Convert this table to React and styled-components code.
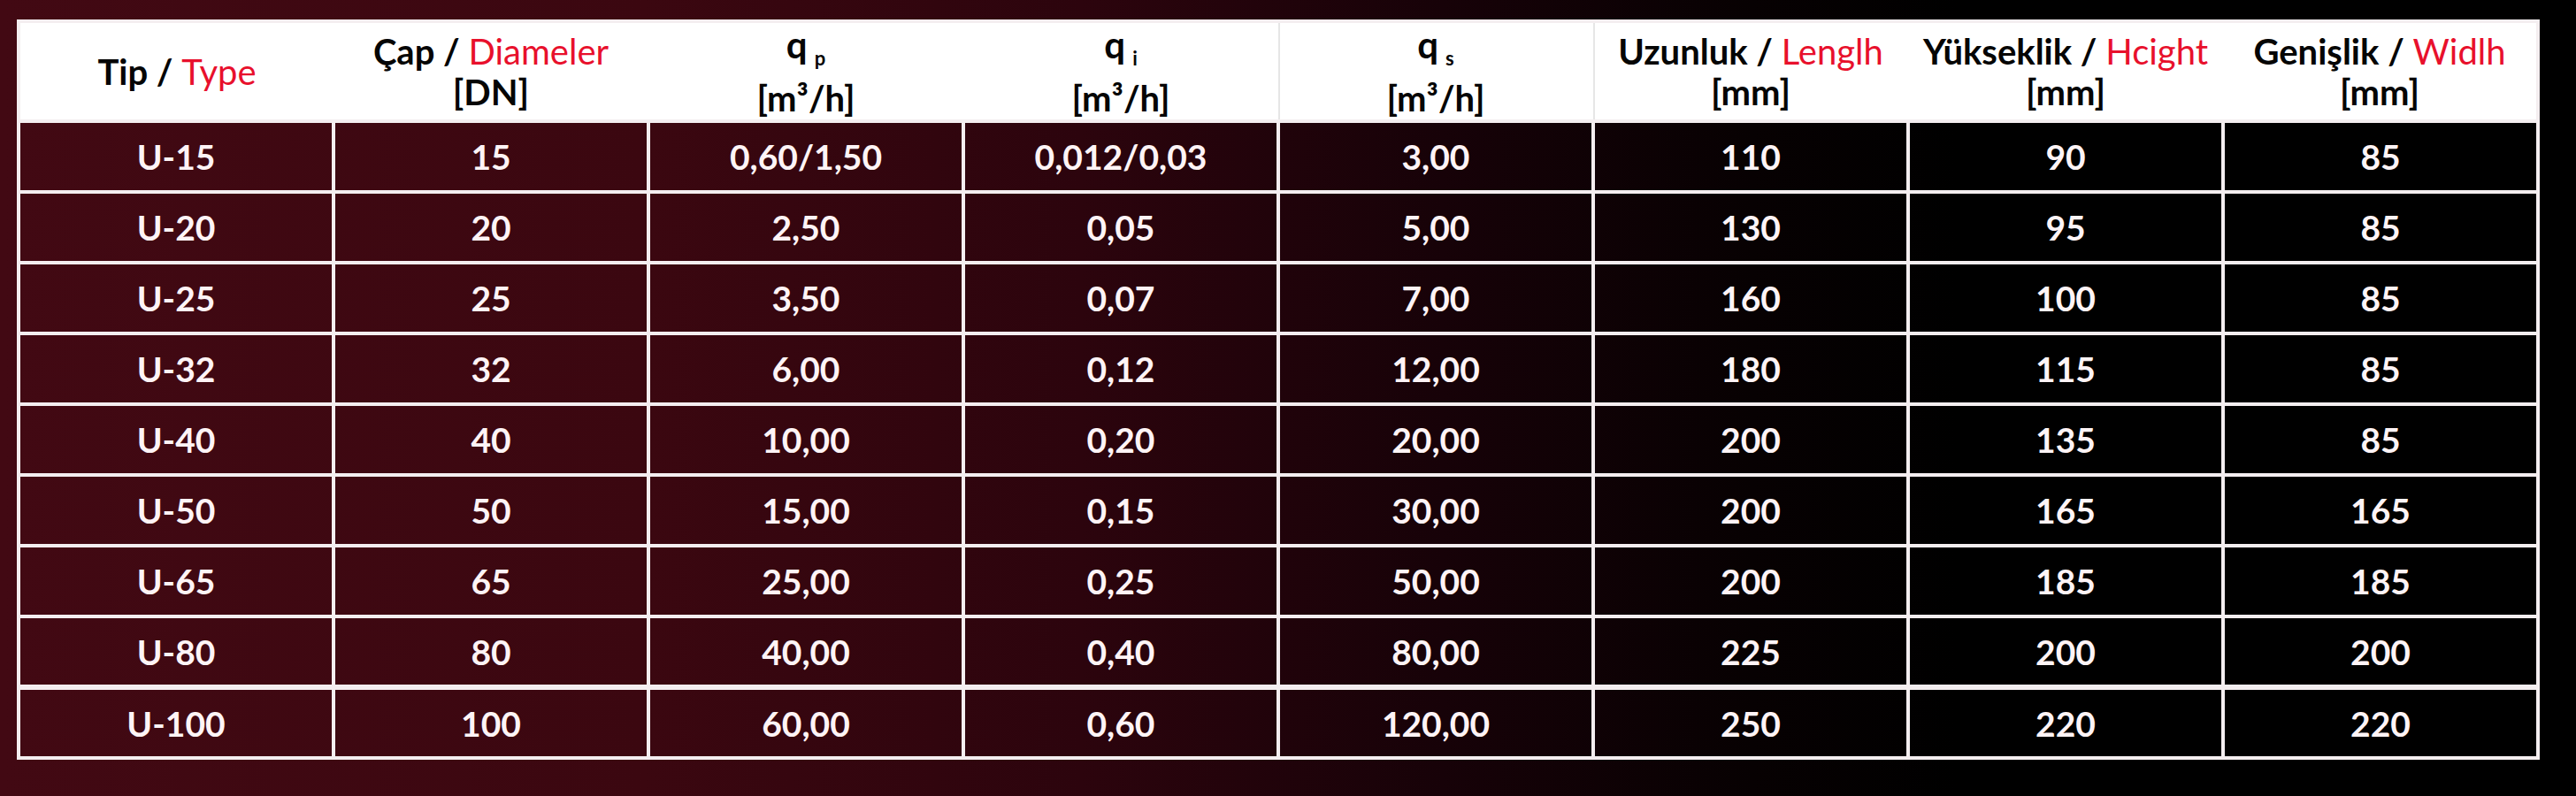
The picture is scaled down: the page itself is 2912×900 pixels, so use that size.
import styled, { createGlobalStyle } from "styled-components";

const GlobalStyle = createGlobalStyle`
  html, body {
    margin: 0;
    padding: 0;
  }
  body {
    width: 2912px;
    height: 900px;
    overflow: hidden;
    background: linear-gradient(
      90deg,
      #420913 0%,
      #3b0710 25%,
      #2c040d 42%,
      #170208 56%,
      #070102 68%,
      #000 76%,
      #000 100%
    );
    font-family: Lato, "Liberation Sans", sans-serif;
  }
`;

const columns = [
  { main: "Tip", en: "Type" },
  { main: "Çap", en: "Diameler", unit: "[DN]" },
  { q: "p", unit: "[m³/h]" },
  { q: "i", unit: "[m³/h]" },
  { q: "s", unit: "[m³/h]", divider: true },
  { main: "Uzunluk", en: "Lenglh", unit: "[mm]", divider: true },
  { main: "Yükseklik", en: "Hcight", unit: "[mm]" },
  { main: "Genişlik", en: "Widlh", unit: "[mm]" },
];

const rows = [
  ["U-15", "15", "0,60/1,50", "0,012/0,03", "3,00", "110", "90", "85"],
  ["U-20", "20", "2,50", "0,05", "5,00", "130", "95", "85"],
  ["U-25", "25", "3,50", "0,07", "7,00", "160", "100", "85"],
  ["U-32", "32", "6,00", "0,12", "12,00", "180", "115", "85"],
  ["U-40", "40", "10,00", "0,20", "20,00", "200", "135", "85"],
  ["U-50", "50", "15,00", "0,15", "30,00", "200", "165", "165"],
  ["U-65", "65", "25,00", "0,25", "50,00", "200", "185", "185"],
  ["U-80", "80", "40,00", "0,40", "80,00", "225", "200", "200"],
  ["U-100", "100", "60,00", "0,60", "120,00", "250", "220", "220"],
];

const App = () => {
  return (
    <>
      <GlobalStyle />
      <Page>
        <SpecTable>
          <colgroup>
            {columns.map((c, i) => (
              <col key={i} style={{ width: "356px" }} />
            ))}
          </colgroup>
          <thead>
            <HeadRow>
              {columns.map((c, i) => (
                <HeadCell key={i} $divider={c.divider}>
                  {c.q ? (
                    <FlowSymbol>
                      q<sub>{c.q}</sub>
                    </FlowSymbol>
                  ) : (
                    <span>
                      {c.main} / <English>{c.en}</English>
                    </span>
                  )}
                  {c.unit && <Unit>{c.unit}</Unit>}
                </HeadCell>
              ))}
            </HeadRow>
          </thead>
          <tbody>
            {rows.map((r, ri) => (
              <BodyRow key={r[0]} $thick={ri === rows.length - 1}>
                {r.map((v, ci) => (
                  <Cell key={ci}>{v}</Cell>
                ))}
              </BodyRow>
            ))}
          </tbody>
        </SpecTable>
      </Page>
    </>
  );
};

const Page = styled.main`
  padding: 22px 0 0 19px;
`;

const SpecTable = styled.table`
  border-collapse: collapse;
  table-layout: fixed;
  width: 2852px;
  border: 4px solid #f4eef0;
`;

const HeadRow = styled.tr`
  height: 113px;
  background: #fff;
`;

const HeadCell = styled.th`
  padding: 0;
  text-align: center;
  vertical-align: middle;
  color: #050505;
  font-size: 40px;
  font-weight: 700;
  line-height: 46px;
  white-space: nowrap;
  box-shadow: ${(p) => (p.$divider ? "inset 2px 0 0 #e6e6e6" : "none")};
`;

const English = styled.span`
  color: #e8102c;
  font-weight: 400;
`;

const Unit = styled.div`
  font-weight: 700;
`;

const FlowSymbol = styled.div`
  font-size: 42px;
  line-height: 44px;
  sub {
    font-size: 22px;
    margin-left: 8px;
    vertical-align: -8px;
  }
`;

const BodyRow = styled.tr`
  height: 80px;
  td {
    border-top-width: ${(p) => (p.$thick ? "6px" : "4px")};
  }
`;

const Cell = styled.td`
  padding: 0;
  border: 4px solid #f4eef0;
  text-align: center;
  vertical-align: middle;
  color: #fff4f6;
  font-size: 39px;
  font-weight: 700;
`;

export default App;
